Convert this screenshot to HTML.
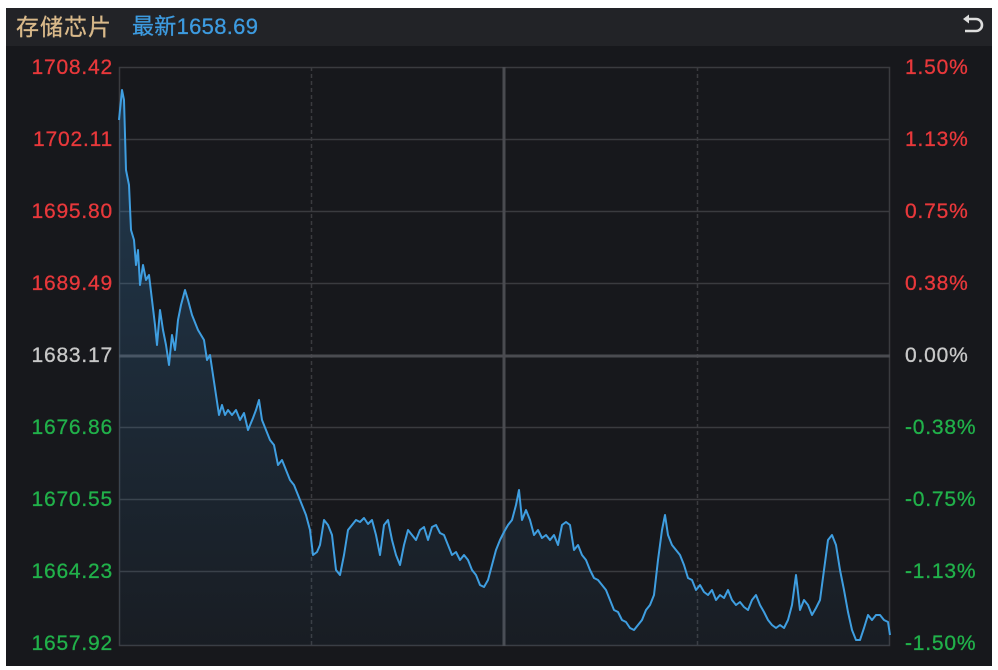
<!DOCTYPE html>
<html><head><meta charset="utf-8"><style>
html,body{margin:0;padding:0;background:#fff;width:998px;height:670px;overflow:hidden}
.panel{position:absolute;left:6px;top:8px;width:986px;height:658px;background:#17181c}
.hdr{position:absolute;left:6px;top:8px;width:986px;height:38px;background:#222327}
.t{position:absolute;font-family:"Liberation Sans","Noto Sans CJK SC",sans-serif;font-size:21px;letter-spacing:0.8px;white-space:nowrap;-webkit-text-stroke:0.3px currentColor;line-height:24px}
.l{left:14px;width:99px;text-align:right}
.r{left:905px}
.red{color:#e8383b}.grn{color:#21b14a}.gry{color:#c8c8c8}
</style></head><body>
<div class="panel"></div>
<div class="hdr"></div>
<div class="t" style="left:16px;top:15px;color:#d9b98a;font-size:23px;letter-spacing:1px">存储芯片</div>
<div class="t" style="left:132px;top:15px;color:#3d9be0;font-size:22px;letter-spacing:0.3px">最新1658.69</div>
<svg style="position:absolute;left:960px;top:14px" width="26" height="24" viewBox="0 0 26 24"><path d="M5 5 H16 A6 6 0 0 1 16 17 H5" fill="none" stroke="#ddd" stroke-width="2.6"/><path d="M3 5 L9 0.5 V9.5Z" fill="#ddd"/></svg>
<svg style="position:absolute;left:0;top:0" width="998" height="670">
<defs><linearGradient id="g" x1="0" y1="0" x2="0" y2="1"><stop offset="0" stop-color="#3d8fd0" stop-opacity="0.28"/><stop offset="1" stop-color="#3d8fd0" stop-opacity="0.04"/></linearGradient></defs>
<g stroke="#3a3b3f" stroke-width="1.5" fill="none">
<rect x="119.5" y="67.5" width="770" height="578"/>
<line x1="119" y1="139.5" x2="890" y2="139.5"/><line x1="119" y1="211.5" x2="890" y2="211.5"/><line x1="119" y1="283.5" x2="890" y2="283.5"/>
<line x1="119" y1="427.5" x2="890" y2="427.5"/><line x1="119" y1="499.5" x2="890" y2="499.5"/><line x1="119" y1="571.5" x2="890" y2="571.5"/>
<line x1="311.5" y1="67" x2="311.5" y2="646" stroke-dasharray="4 3"/><line x1="697.5" y1="67" x2="697.5" y2="646" stroke-dasharray="4 3"/>
</g>
<line x1="119" y1="356" x2="890" y2="356" stroke="#4a4b50" stroke-width="3"/>
<line x1="504" y1="67" x2="504" y2="646" stroke="#4a4b50" stroke-width="3"/>
<polygon fill="url(#g)" points="119,646 119,120 122,90 124,100 126,170 129,185 131,230 134,240 136,265 138,250 140,285 143,265 146,280 149,275 152,300 155,325 157,345 160,310 163,330 166,345 169,365 172,335 175,350 178,320 181,305 185,290 188,300 192,315 198,330 204,340 207,360 210,355 213,375 216,395 219,415 222,405 225,415 228,410 232,415 236,410 240,420 244,413 248,430 253,418 256,410 259,400 262,420 266,430 270,440 274,445 278,465 282,460 286,470 290,480 294,485 298,495 302,505 306,515 310,530 313,555 317,552 320,545 324,520 328,525 332,535 336,570 340,575 344,555 348,530 352,525 356,520 360,522 364,518 368,524 372,520 376,535 380,555 384,525 388,520 392,540 396,555 400,565 404,545 408,530 412,535 416,540 420,530 424,527 428,540 432,527 436,525 440,533 444,535 448,545 452,555 456,552 460,560 464,555 468,560 472,570 476,575 480,585 484,587 488,580 492,565 496,550 500,540 504,532 508,525 512,520 516,505 519,490 522,520 526,510 530,520 534,535 538,530 542,538 546,535 550,540 554,535 558,545 562,525 566,522 570,525 574,550 578,545 582,555 586,560 590,570 594,578 598,580 602,585 606,590 610,600 614,610 618,612 622,620 626,622 630,628 634,630 638,625 642,620 646,610 650,605 654,595 658,560 662,530 665,515 668,535 672,545 676,550 680,555 684,565 688,578 692,580 696,590 700,585 704,592 708,595 712,590 716,600 720,595 724,598 728,590 732,600 736,605 740,602 744,607 748,610 752,600 756,595 760,605 764,612 768,620 772,625 776,628 780,625 784,628 788,620 792,605 796,575 800,610 804,600 808,605 812,615 816,608 820,600 824,570 828,540 832,535 836,545 840,570 844,590 848,612 852,630 856,640 860,640 864,628 868,615 872,620 876,615 880,615 884,620 888,622 890,635 890,646"/>
<polyline fill="none" stroke="#3f9ee0" stroke-width="2" stroke-linejoin="round" points="119,120 122,90 124,100 126,170 129,185 131,230 134,240 136,265 138,250 140,285 143,265 146,280 149,275 152,300 155,325 157,345 160,310 163,330 166,345 169,365 172,335 175,350 178,320 181,305 185,290 188,300 192,315 198,330 204,340 207,360 210,355 213,375 216,395 219,415 222,405 225,415 228,410 232,415 236,410 240,420 244,413 248,430 253,418 256,410 259,400 262,420 266,430 270,440 274,445 278,465 282,460 286,470 290,480 294,485 298,495 302,505 306,515 310,530 313,555 317,552 320,545 324,520 328,525 332,535 336,570 340,575 344,555 348,530 352,525 356,520 360,522 364,518 368,524 372,520 376,535 380,555 384,525 388,520 392,540 396,555 400,565 404,545 408,530 412,535 416,540 420,530 424,527 428,540 432,527 436,525 440,533 444,535 448,545 452,555 456,552 460,560 464,555 468,560 472,570 476,575 480,585 484,587 488,580 492,565 496,550 500,540 504,532 508,525 512,520 516,505 519,490 522,520 526,510 530,520 534,535 538,530 542,538 546,535 550,540 554,535 558,545 562,525 566,522 570,525 574,550 578,545 582,555 586,560 590,570 594,578 598,580 602,585 606,590 610,600 614,610 618,612 622,620 626,622 630,628 634,630 638,625 642,620 646,610 650,605 654,595 658,560 662,530 665,515 668,535 672,545 676,550 680,555 684,565 688,578 692,580 696,590 700,585 704,592 708,595 712,590 716,600 720,595 724,598 728,590 732,600 736,605 740,602 744,607 748,610 752,600 756,595 760,605 764,612 768,620 772,625 776,628 780,625 784,628 788,620 792,605 796,575 800,610 804,600 808,605 812,615 816,608 820,600 824,570 828,540 832,535 836,545 840,570 844,590 848,612 852,630 856,640 860,640 864,628 868,615 872,620 876,615 880,615 884,620 888,622 890,635"/>
</svg>
<div class="t l red" style="top:56px">1708.42</div>
<div class="t l red" style="top:128px">1702.11</div>
<div class="t l red" style="top:200px">1695.80</div>
<div class="t l red" style="top:272px">1689.49</div>
<div class="t l gry" style="top:344px">1683.17</div>
<div class="t l grn" style="top:416px">1676.86</div>
<div class="t l grn" style="top:488px">1670.55</div>
<div class="t l grn" style="top:560px">1664.23</div>
<div class="t l grn" style="top:632px">1657.92</div>
<div class="t r red" style="top:56px">1.50%</div>
<div class="t r red" style="top:128px">1.13%</div>
<div class="t r red" style="top:200px">0.75%</div>
<div class="t r red" style="top:272px">0.38%</div>
<div class="t r gry" style="top:344px">0.00%</div>
<div class="t r grn" style="top:416px">-0.38%</div>
<div class="t r grn" style="top:488px">-0.75%</div>
<div class="t r grn" style="top:560px">-1.13%</div>
<div class="t r grn" style="top:632px">-1.50%</div>
</body></html>
